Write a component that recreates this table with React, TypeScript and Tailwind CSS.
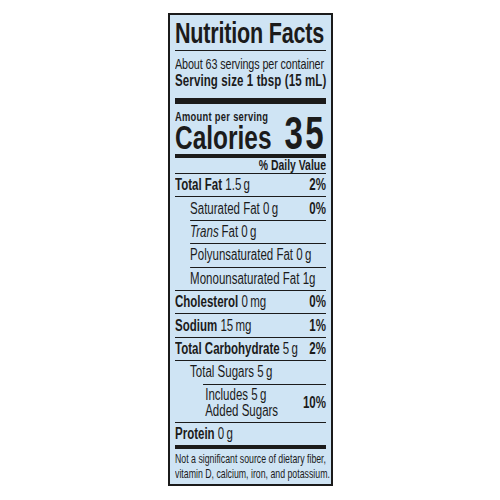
import React from 'react'

interface Nutrient {
  name: string
  italic?: string
  value: string
  dv?: string
  bold?: boolean
  indent: 0 | 1
  line: 0 | 1
}

const nutrients: Nutrient[] = [
  { name: 'Total Fat', value: '1.5\u2009g', dv: '2%', bold: true, indent: 0, line: 0 },
  { name: 'Saturated Fat', value: '0\u2009g', dv: '0%', indent: 1, line: 0 },
  { name: 'Fat', italic: 'Trans', value: '0\u2009g', indent: 1, line: 1 },
  { name: 'Polyunsaturated Fat', value: '0\u2009g', indent: 1, line: 1 },
  { name: 'Monounsaturated Fat', value: '1g', indent: 1, line: 1 },
  { name: 'Cholesterol', value: '0\u2009mg', dv: '0%', bold: true, indent: 0, line: 0 },
  { name: 'Sodium', value: '15\u2009mg', dv: '1%', bold: true, indent: 0, line: 0 },
  { name: 'Total Carbohydrate', value: '5\u2009g', dv: '2%', bold: true, indent: 0, line: 0 },
  { name: 'Total Sugars', value: '5\u2009g', indent: 1, line: 0 },
]

// label is set in a condensed face: the content is laid out 210px wide and squeezed to 151px
const Row: React.FC<{ n: Nutrient }> = ({ n }) => (
  <div className={`border-t border-[#1b1b1b] ${n.line ? 'ml-[21px]' : ''}`}>
    <div
      className={`flex h-[22.4px] items-center justify-between text-[16px] leading-none ${
        n.indent && !n.line ? 'pl-[21px]' : ''
      }`}
    >
      <span className="whitespace-nowrap">
        {n.italic && <i className="mr-[4px]">{n.italic}</i>}
        <span className={n.bold ? 'font-bold' : ''}>{n.name}</span> {n.value}
      </span>
      {n.dv && <span className="font-bold">{n.dv}</span>}
    </div>
  </div>
)

export default function App() {
  return (
    <div className="flex min-h-[500px] justify-center bg-white pt-[13px]">
      <div className="h-fit w-[165px] border-2 border-[#1b1b1b] bg-[#cfe4f4] px-[5px] font-['Liberation_Sans',Arial,sans-serif] text-[#1b1b1b]">
        <div className="w-[210px] origin-left scale-x-[0.719]">
          <h1 className="mt-[3px] whitespace-nowrap border-b border-[#1b1b1b] pb-[2px] text-[30px] font-bold leading-none tracking-[-0.01em]">
            Nutrition Facts
          </h1>
          <p className="mt-[5px] whitespace-nowrap text-[15px] leading-[15px] tracking-[-0.01em]">
            About 63 servings per container
          </p>
          <p className="mt-[2px] whitespace-nowrap text-[16px] font-bold leading-[16px] tracking-[0.01em]">
            Serving size 1 tbsp (15 mL)
          </p>
          <div className="mt-[9px] h-[6px] bg-[#1b1b1b]" />

          <div className="mt-[7px] flex items-end justify-between">
            <div>
              <p className="text-[13px] font-bold leading-[11px] tracking-[0.03em]">Amount per serving</p>
              <p className="text-[34px] font-bold leading-[30px]">Calories</p>
            </div>
            <span className="mb-[4px] text-[46px] font-bold leading-[30px] tracking-[0.07em]">35</span>
          </div>

          <div className="mt-[2px] flex h-[19px] items-center justify-end border-t-4 border-[#1b1b1b] text-[14.5px] font-bold leading-none">
            % Daily Value
          </div>

          {nutrients.map((n) => (
            <Row key={n.name + n.value} n={n} />
          ))}

          <div className="ml-[39px] border-t border-[#1b1b1b]">
            <div className="flex h-[37px] items-center justify-between pl-[3px] text-[16px] leading-[16px]">
              <p>
                Includes 5{'\u2009'}g
                <br />
                Added Sugars
              </p>
              <span className="font-bold">10%</span>
            </div>
          </div>

          <div className="flex h-[23px] items-center border-t border-[#1b1b1b] text-[16px] leading-none">
            <span className="font-bold">Protein</span>&nbsp;0{'\u2009'}g
          </div>

          <p className="whitespace-nowrap border-t-4 border-[#1b1b1b] pb-px pt-[3px] text-[12.2px] leading-[15.5px]">
            Not a significant source of dietary fiber,
            <br />
            vitamin D, calcium, iron, and potassium.
          </p>
        </div>
      </div>
    </div>
  )
}
